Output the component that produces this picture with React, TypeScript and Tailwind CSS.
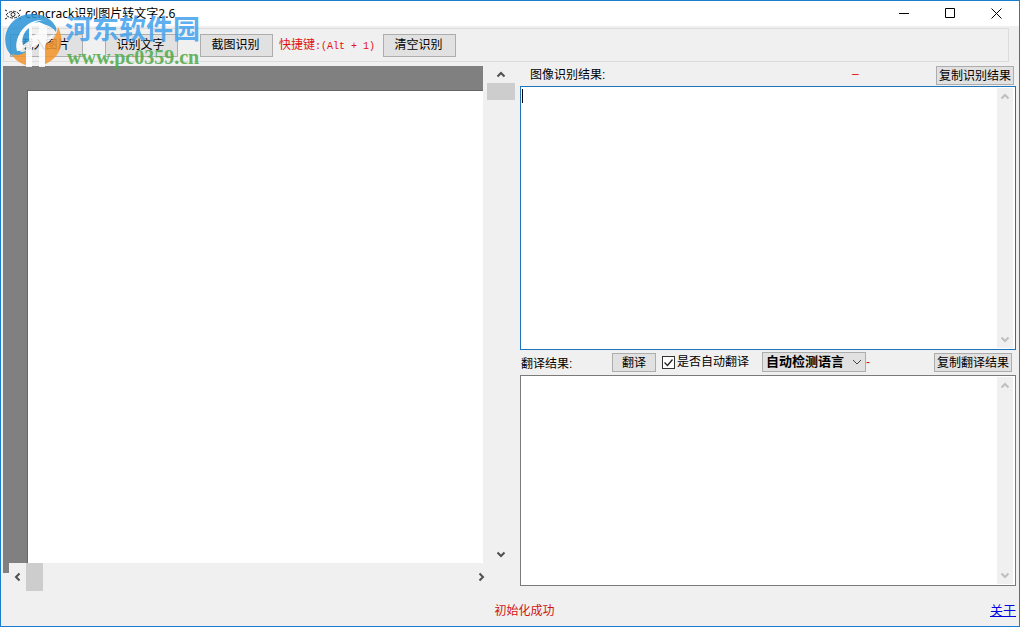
import { useState } from 'react'

const tools = ['载入图片', '识别文字', '截图识别']

const paths = {
  up: 'M1.5 6.5 5 3l3.5 3.5',
  down: 'M1.5 3.5 5 7l3.5-3.5',
  left: 'M6.5 1.5 3 5l3.5 3.5',
  right: 'M3.5 1.5 7 5 3.5 8.5',
}

function Arrow({ dir, className }: { dir: keyof typeof paths; className: string }) {
  return (
    <svg viewBox="0 0 10 10" className={`size-[10px] shrink-0 ${className}`} fill="none" stroke="currentColor" strokeWidth="2">
      <path d={paths[dir]} />
    </svg>
  )
}

function Watermark() {
  return (
    <div className="pointer-events-none absolute top-2 left-0 flex opacity-85">
      <svg viewBox="0 0 64 60" className="h-[60px] w-16 shrink-0">
        <path d="M5 37C1 21 13 5 31 5c10 0 18 4 22 10-6-4-13-5-19-3C24 15 19 22 17 30c-1 4-1 7 0 10 2 4 6 4 9 1v9C15 51 7 46 5 37z" fill="#2b94d6" />
        <path d="M57 18c8 15 2 33-16 38V38l7-4c5-4 8-9 9-16z" fill="#f5952c" />
        <path d="M26 42h4v15c-9-1-16-5-19-12 5 2 10 1 15-3z" fill="#f5952c" />
        <path d="M16 42c-3-10 3-21 12-27l3-1v13l7-3V14l8 5v10l7-4c-2 5-5 8-9 10v23h-6V35l-7 3v20h-6V38c-3 3-6 4-9 4z" fill="#fff" />
        <path d="M22 36c-2-7 1-13 6-17v13z" fill="#2b94d6" />
        <path d="M33 14c7-4 14-4 19 0 3 3 4 6 3 9-3-4-6-6-10-7l-7-3z" fill="#2b94d6" />
      </svg>
      <div className="whitespace-nowrap">
        <div className="font-['Noto_Sans_CJK_SC',sans-serif] text-[27px] leading-[38px] font-bold text-[#43a2ee]">河东软件园</div>
        <div className="pl-0.5 font-['Liberation_Serif',serif] text-[20px] leading-5 font-bold text-[#4eaa46]">www.pc0359.cn</div>
      </div>
    </div>
  )
}

export default function App() {
  const [result, setResult] = useState('')
  const [translation, setTranslation] = useState('')
  const [auto, setAuto] = useState(true)

  return (
    <div className="relative flex min-h-screen flex-col border border-[#1c7cd0] bg-[#f0f0f0] font-['Liberation_Sans','Noto_Sans_CJK_SC',sans-serif] text-xs text-black">
      {/* 标题栏 */}
      <header className="flex h-[25px] items-center bg-white pl-1">
        <svg viewBox="0 0 16 12" className="h-3 w-4" fill="none" stroke="#222">
          <path d="M1 7c4-5 10-5 14 0-4 4-10 4-14 0z" strokeDasharray="3 1" />
          <circle cx="8" cy="6.500" r="2" />
          <path d="M0 2l2 1M16 2l-2 1M0 11l2-1M16 11l-2-1" />
        </svg>
        <h1 className="flex-1 pl-1 font-['Noto_Sans','Noto_Sans_CJK_SC',sans-serif]">cencrack识别图片转文字2.6</h1>
        <button aria-label="最小化" className="flex w-[46px] justify-center">
          <svg viewBox="0 0 11 11" className="size-[11px]" stroke="#000"><path d="M0 5.5h10" /></svg>
        </button>
        <button aria-label="最大化" className="flex w-[46px] justify-center">
          <svg viewBox="0 0 11 11" className="size-[11px]" fill="none" stroke="#000"><path d="M.5.5h9v9h-9z" /></svg>
        </button>
        <button aria-label="关闭" className="flex w-[46px] justify-center">
          <svg viewBox="0 0 11 11" className="size-[11px]" stroke="#000"><path d="M.5.5l10 10M10.5.5l-10 10" /></svg>
        </button>
      </header>

      {/* 工具栏 */}
      <div className="mt-0.5 mr-2.5 ml-0.5 flex h-[34px] items-center border border-[#dcdcdc] pl-1.5">
        <div className="flex gap-[22px]">
          {tools.map(t => (
            <button key={t} className="h-[23px] w-[73px] border border-[#adadad] bg-[#e1e1e1] pr-0.5 leading-5">{t}</button>
          ))}
        </div>
        <span className="w-[110px] pl-1.5 whitespace-nowrap text-[#e01010]">
          快捷键<span className="font-['Liberation_Mono',monospace] text-[10px]">:(Alt + 1)</span>
        </span>
        <button className="h-[23px] w-[73px] border border-[#adadad] bg-[#e1e1e1] pr-0.5 leading-5">清空识别</button>
      </div>

      <main className="mt-1 mr-[3px] ml-0.5 grid flex-1 grid-cols-[512fr_496fr] gap-[5px]">
        {/* 图片预览 */}
        <section className="flex flex-col pb-1">
          <div className="flex flex-1">
            <div className="flex flex-1 bg-[#808080] pt-6 pl-6">
              <div className="flex-1 border-t border-l border-[#666] bg-white" />
            </div>
            <div className="ml-1 flex w-7 flex-col items-center">
              <div className="flex h-[17px] items-center"><Arrow dir="up" className="text-[#505050]" /></div>
              <div className="h-[17px] w-full bg-[#cdcdcd]" />
              <Arrow dir="down" className="mt-auto mb-1 text-[#505050]" />
            </div>
          </div>
          <div className="flex h-7">
            <div className="h-2.5 w-1.5 bg-[#808080]" />
            <div className="flex w-[17px] items-center justify-center"><Arrow dir="left" className="text-[#505050]" /></div>
            <div className="w-[17px] bg-[#cdcdcd]" />
            <Arrow dir="right" className="mr-[29px] ml-auto self-center text-[#505050]" />
          </div>
        </section>

        <section className="flex flex-col pb-[9px]">
          <div className="flex h-5 items-start pr-0.5 pl-2.5">
            <label htmlFor="result" className="flex-1 leading-[18px]">图像识别结果:</label>
            <span className="w-[84px] leading-4 text-[#e01010]">–</span>
            <button className="h-[19px] w-[78px] border border-[#adadad] bg-[#e1e1e1] leading-[18px] whitespace-nowrap">复制识别结果</button>
          </div>
          <div className="relative flex flex-[264] border border-[#1c74bc] bg-white">
            <textarea id="result" value={result} onChange={e => setResult(e.target.value)} className="flex-1 resize-none p-0.5 outline-none" />
            <span className="absolute top-0.5 left-px h-3.5 w-px bg-black" />
            <div className="my-px mr-0.5 flex w-4 flex-col items-center justify-between bg-[#f0f0f0] py-1">
              <Arrow dir="up" className="text-[#bfbfbf]" />
              <Arrow dir="down" className="text-[#bfbfbf]" />
            </div>
          </div>
          <div className="flex h-[25px] items-center pr-1">
            <label htmlFor="translation" className="w-[92px] pt-1 pl-px">翻译结果:</label>
            <button className="h-[19px] w-11 border border-[#adadad] bg-[#e1e1e1] leading-[18px]">翻译</button>
            <label className="ml-1.5 flex w-[100px] items-center gap-0.5 whitespace-nowrap">
              <span className="relative flex">
                <input type="checkbox" checked={auto} onChange={e => setAuto(e.target.checked)} className="peer size-[13px] appearance-none border border-[#333] bg-white" />
                <svg viewBox="0 0 13 13" className="pointer-events-none absolute inset-0 hidden size-[13px] peer-checked:block" fill="none" stroke="#222" strokeWidth="1.3">
                  <path d="M2.5 6.5l3 3 5-6" />
                </svg>
              </span>
              是否自动翻译
            </label>
            <div className="relative flex">
              <select aria-label="语言" className="h-5 w-[104px] appearance-none border border-[#adadad] bg-[#e1e1e1] pl-[3px] text-[13px] leading-[18px] font-bold">
                <option>自动检测语言</option>
              </select>
              <svg viewBox="0 0 10 10" className="pointer-events-none absolute top-[5px] right-1 size-2.5" fill="none" stroke="#444">
                <path d="M1 3l4 4 4-4" />
              </svg>
            </div>
            <span className="flex-1 text-[#e01010]">-</span>
            <button className="h-[19px] w-[78px] border border-[#adadad] bg-[#e1e1e1] leading-[18px] whitespace-nowrap">复制翻译结果</button>
          </div>
          <div className="flex flex-[211] border border-[#7a7a7a] bg-white">
            <textarea id="translation" value={translation} onChange={e => setTranslation(e.target.value)} className="flex-1 resize-none p-0.5 outline-none" />
            <div className="my-px mr-0.5 flex w-4 flex-col items-center justify-between bg-[#f0f0f0] py-1">
              <Arrow dir="up" className="text-[#bfbfbf]" />
              <Arrow dir="down" className="text-[#bfbfbf]" />
            </div>
          </div>
        </section>
      </main>

      {/* 状态栏 */}
      <footer className="grid h-[31px] grid-cols-[1fr_auto_1fr] items-center pr-[3px] pl-8">
        <p className="col-start-2 text-[#d01414]">初始化成功</p>
        <a href="#about" className="justify-self-end text-[13px] text-[#0000e0] underline">关于</a>
      </footer>

      <Watermark />
    </div>
  )
}
